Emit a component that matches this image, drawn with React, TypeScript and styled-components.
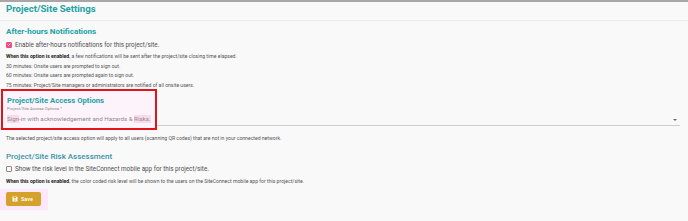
import React, { useState } from 'react';
import styled, { createGlobalStyle } from 'styled-components';

const GlobalStyle = createGlobalStyle`
  html, body {
    margin: 0;
    background: #f9f9f9;
    font-family: Roboto, 'Liberation Sans', sans-serif;
  }
`;

const Page = styled.div`
  border-top: 2px solid #a7a7a7;
  min-height: 219px;
  background: #f9f9f9;
`;

const TitleBar = styled.div`
  height: 17px;
  padding: 1px 6px 0;
  border-bottom: 1px solid #ececec;
`;

const Title = styled.h1`
  margin: 0;
  font-size: 9.6px;
  line-height: 12px;
  font-weight: 700;
  color: #22a2a5;
`;

const Content = styled.div`
  padding: 0 6px;
`;

const Heading = styled.h2<{ light?: boolean }>`
  margin: ${({ light }) => (light ? '8px 0 0' : '6px 0 0')};
  font-size: 8px;
  line-height: 10px;
  font-weight: ${({ light }) => (light ? 500 : 700)};
  color: ${({ light }) => (light ? '#3a93a8' : '#22a2a5')};
`;

const CheckRow = styled.label`
  display: flex;
  align-items: center;
  gap: 3px;
  height: 9px;
  margin-top: 3px;
  font-size: 6.3px;
  color: #505050;
  cursor: pointer;
`;

const Box = styled.span<{ checked: boolean }>`
  display: flex;
  align-items: center;
  justify-content: center;
  flex-shrink: 0;
  width: 6px;
  height: 6px;
  box-sizing: border-box;
  border: 1px solid ${({ checked }) => (checked ? '#ec4c84' : '#8a8a8a')};
  background: ${({ checked }) => (checked ? '#ec4c84' : 'transparent')};
  border-radius: 1px;
`;

const Note = styled.p<{ $gap?: number }>`
  margin: ${({ $gap = 0 }) => `${$gap}px 0 0`};
  font-size: 5.1px;
  line-height: 9.6px;
  color: #555;

  b {
    font-weight: 700;
    color: #222;
  }
`;

const Notes = styled.div`
  margin-top: 3px;
`;

const AccessRow = styled.div`
  display: flex;
  align-items: flex-end;
  margin: -1px 0 0 -5px;
`;

const Highlight = styled.div`
  width: 148px;
  height: 35px;
  padding: 2px 0 0 4px;
  border: 2px solid #e3131b;
  background: #fdf3fa;
`;

const AccessHeading = styled(Heading)`
  margin: 3px 0 0;
  font-size: 7.7px;
`;

const FieldLabel = styled.div`
  margin-top: 0;
  font-size: 4.2px;
  line-height: 6px;
  color: #8a8a8a;
`;

const FieldValue = styled.div`
  margin-top: 3px;
  font-size: 6.2px;
  line-height: 8px;
  color: #8c8c8c;

  span {
    background: #fbd9ec;
  }
`;

const SelectRest = styled.div`
  flex: 1;
  position: relative;
  height: 12px;
  margin-bottom: 4px;
  margin-right: 2px;
  border-bottom: 1px solid #cfcfcf;
`;

const Arrow = styled.span`
  position: absolute;
  right: 3px;
  top: 6px;
  width: 0;
  height: 0;
  border-left: 2px solid transparent;
  border-right: 2px solid transparent;
  border-top: 2px solid #666;
`;

const SaveHalo = styled.div`
  display: flex;
  width: fit-content;
  margin: 2px 0 0 -6px;
  padding: 3px 7px 4px 6px;
  background: #fde7fb;
`;

const SaveButton = styled.button`
  display: flex;
  align-items: center;
  gap: 3px;
  width: 35px;
  height: 14px;
  padding: 0 0 0 6px;
  border: 0;
  border-radius: 2px;
  background: #d4a12a;
  color: #fff;
  font-family: Roboto, 'Liberation Sans', sans-serif;
  font-size: 5.5px;
  font-weight: 500;
  cursor: pointer;
`;

const Check = () => (
  <svg width="5" height="5" viewBox="0 0 10 10">
    <path d="M1.5 5.2 L4 7.6 L8.6 2.4" fill="none" stroke="#fff" strokeWidth="1.8" />
  </svg>
);

const Floppy = () => (
  <svg width="6" height="6" viewBox="0 0 12 12">
    <path d="M1 1h8l2 2v8H1z" fill="#fff" />
    <rect x="3" y="1.5" width="5" height="3" fill="#d4a12a" />
    <circle cx="6" cy="8" r="1.6" fill="#d4a12a" />
  </svg>
);

export default function App() {
  const [afterHours, setAfterHours] = useState(true);
  const [riskLevel, setRiskLevel] = useState(false);

  return (
    <>
      <GlobalStyle />
      <Page>
        <TitleBar>
          <Title>Project/Site Settings</Title>
        </TitleBar>
        <Content>
          <Heading>After-hours Notifications</Heading>
          <CheckRow onClick={() => setAfterHours(!afterHours)}>
            <Box checked={afterHours}>{afterHours && <Check />}</Box>
            Enable after-hours notifications for this project/site.
          </CheckRow>
          <Notes>
            <Note>
              <b>When this option is enabled</b>, a few notifications will be sent after the project/site closing time
              elapsed.
            </Note>
            <Note>30 minutes: Onsite users are prompted to sign out.</Note>
            <Note>60 minutes: Onsite users are prompted again to sign out.</Note>
            <Note>75 minutes: Project/Site managers or administrators are notified of all onsite users.</Note>
          </Notes>

          <AccessRow>
            <Highlight>
              <AccessHeading>Project/Site Access Options</AccessHeading>
              <FieldLabel>Project/Site Access Options *</FieldLabel>
              <FieldValue>
                <span>Sign</span>-in with acknowledgement and Hazards &amp; <span>Risks.</span>
              </FieldValue>
            </Highlight>
            <SelectRest>
              <Arrow />
            </SelectRest>
          </AccessRow>

          <Note $gap={4}>
            The selected project/site access option will apply to all users (scanning QR codes) that are not in your
            connected network.
          </Note>

          <Heading light>Project/Site Risk Assessment</Heading>
          <CheckRow onClick={() => setRiskLevel(!riskLevel)}>
            <Box checked={riskLevel}>{riskLevel && <Check />}</Box>
            Show the risk level in the SiteConnect mobile app for this project/site.
          </CheckRow>
          <Note $gap={3}>
            <b>When this option is enabled</b>, the color coded risk level will be shown to the users on the
            SiteConnect mobile app for this project/site.
          </Note>

          <SaveHalo>
            <SaveButton>
              <Floppy />
              Save
            </SaveButton>
          </SaveHalo>
        </Content>
      </Page>
    </>
  );
}
